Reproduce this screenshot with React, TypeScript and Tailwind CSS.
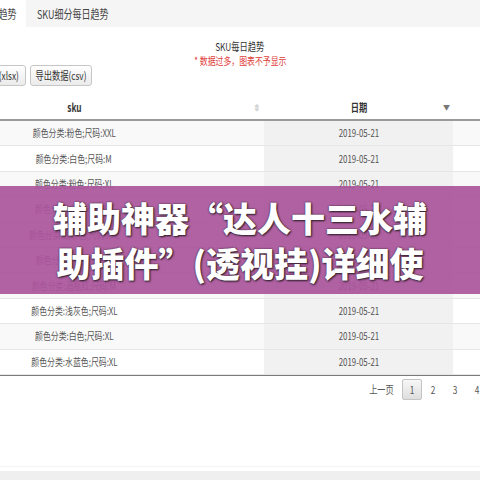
import React from 'react';

const rows = [
  '颜色分类:粉色;尺码:XXL',
  '颜色分类:白色;尺码:M',
  '颜色分类:粉色;尺码:XL',
  '颜色分类:白色;尺码:XL',
  '颜色分类:浅灰色;尺码:XXL',
  '颜色分类:粉色;尺码:M',
  '颜色分类:酒瓶红;尺码:M',
  '颜色分类:浅灰色;尺码:XL',
  '颜色分类:白色;尺码:XL',
  '颜色分类:水蓝色;尺码:XL',
];

// the source screenshot is squeezed sideways, so text is narrowed
const T: React.FC<{ children: React.ReactNode; className?: string }> = ({ children, className = '' }) => (
  <span className={`inline-block whitespace-nowrap scale-x-[0.75] ${className}`}>{children}</span>
);

const btn =
  'h-[21px] rounded-[3px] border border-[#c6c6c6] bg-gradient-to-b from-white to-[#ebebeb] text-[11px] text-[#333] flex items-center justify-center';

export default function App() {
  return (
    <div
      className="relative w-[480px] h-[480px] overflow-hidden bg-white flex flex-col"
      style={{ fontFamily: '"Noto Sans CJK SC", "Noto Sans", sans-serif' }}
    >
      <div className="ml-[-116px] w-[712px]">
        {/* tabs */}
        <div className="h-[27px] bg-[#f5f5f5] flex text-[12px] text-[#444]">
          <div className="ml-[70px] w-[72px] bg-white flex items-center justify-center">
            <T>SKU每日趋势</T>
          </div>
          <div className="w-[94px] flex items-center justify-center">
            <T>SKU细分每日趋势</T>
          </div>
        </div>

        {/* chart placeholder */}
        <div className="mt-[12px] text-center text-[11px] leading-[15px] text-[#333]">
          <T>SKU每日趋势</T>
        </div>
        <div className="text-center text-[10.5px] leading-[14px] text-[#e0403a]">
          <T>* 数据过多，图表不予显示</T>
        </div>

        <div className="mt-[-3px] flex gap-[4px] ml-[74px]">
          <button className={`${btn} w-[68px]`}>
            <T>导出数据(xlsx)</T>
          </button>
          <button className={`${btn} w-[62px]`}>
            <T>导出数据(csv)</T>
          </button>
        </div>

        {/* table */}
        <div className="mt-[10px] border-b border-[#7a7a7a]">
          <div className="h-[25px] flex border-b-2 border-[#9a9a9a] text-[11px] font-bold text-[#333]">
            <div className="w-[380px] relative flex items-center justify-center">
              <T>sku</T>
              <span className="absolute right-[3px] text-[9px] text-[#d0d0d0] leading-none">⇕</span>
            </div>
            <div className="w-[189px] relative flex items-center justify-center">
              <T>日期</T>
              <span className="absolute right-[3px] text-[7px] text-[#777] leading-none font-normal">▼</span>
            </div>
            <div className="flex-1" />
          </div>
          {rows.map((r, i) => (
            <div
              key={i}
              className={`h-[25.4px] flex border-b border-[#e6e6e6] text-[10.5px] text-[#555] ${
                i % 2 === 0 ? 'bg-[#f9f9f9]' : 'bg-white'
              }`}
            >
              <div className="w-[380px] flex items-center justify-center">
                <T>{r}</T>
              </div>
              <div className="w-[189px] flex items-center justify-center bg-[#f1f1f1]">
                <T>2019-05-21</T>
              </div>
              <div className="flex-1" />
            </div>
          ))}
        </div>

        {/* pagination */}
        <div className="mt-[3px] ml-[486px] flex items-center h-[21px] text-[11px] text-[#555]">
          <span className="w-[22px] mr-[10px] flex justify-center">
            <T>上一页</T>
          </span>
          <span className="w-[20px] h-[21px] rounded-[2px] border border-[#c4c4c4] bg-gradient-to-b from-[#f7f7f7] to-[#dedede] flex items-center justify-center">
            <T>1</T>
          </span>
          <span className="w-[22px] flex justify-center">
            <T>2</T>
          </span>
          <span className="w-[22px] flex justify-center">
            <T>3</T>
          </span>
          <span className="w-[22px] flex justify-center">
            <T>4</T>
          </span>
        </div>
      </div>

      <div className="flex-1 border-b border-[#f4f4f4]" />
      <div className="mt-[4px] h-[9px] bg-[#efefef]" />

      {/* overlay banner */}
      <div className="absolute left-0 right-0 top-[186px] h-[108px] bg-[rgba(170,85,155,0.92)] flex flex-col items-center justify-center">
        <div className="text-[34px] leading-[45px] font-black text-white whitespace-nowrap [text-shadow:0_0_2px_#3a2a36,1px_1px_2px_#2a1a26]">
          辅助神器“达人十三水辅
        </div>
        <div className="text-[34px] leading-[45px] font-black text-white whitespace-nowrap [text-shadow:0_0_2px_#3a2a36,1px_1px_2px_#2a1a26]">
          助插件”(透视挂)详细使
        </div>
      </div>
    </div>
  );
}
